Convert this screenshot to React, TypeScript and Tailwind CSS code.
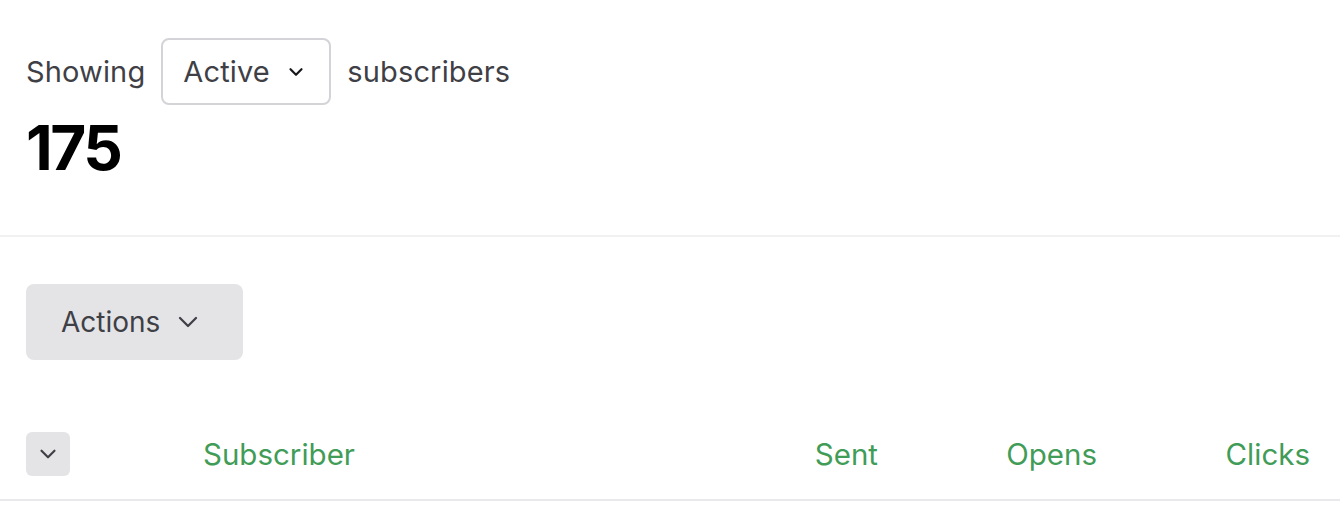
import { ChevronDown } from "lucide-react";

const App = () => {
  return (
    <div className="w-[1340px] h-[515px] bg-white font-['Inter',sans-serif] overflow-hidden">
      <section className="px-[26px] pt-[38px] pb-[56px] border-b-2 border-[#f1f1f2]">
        <div className="flex items-center gap-[16px] text-[29px] text-[#3f3f46] tracking-[0.005em]">
          <span>Showing</span>
          <button className="h-[67px] w-[170px] flex items-center pl-[20px] pr-[22px] justify-between border-2 border-[#d4d4d8] rounded-[8px] text-[#3f3f46]">
            <span>Active</span>
            <ChevronDown className="w-[22px] h-[22px] text-[#18181b]" strokeWidth={2.4} />
          </button>
          <span>subscribers</span>
        </div>
        <div className="mt-[12px] text-[62px] leading-[1] font-bold text-black tracking-[-0.04em]">175</div>
      </section>

      <div className="px-[26px] pt-[47px]">
        <button className="h-[76px] w-[217px] bg-[#e4e4e7] rounded-[8px] flex items-center pl-[35px] gap-[12px] text-[28px] text-[#3f3f46]">
          <span>Actions</span>
          <ChevronDown className="w-[32px] h-[32px]" strokeWidth={1.7} />
        </button>
      </div>

      <div className="mt-[49px] grid grid-cols-[177px_1fr_220px_219px_213px] items-center h-[92px] pl-[26px] pr-[30px] border-b-2 border-[#e9e9ec] text-[29.5px] text-[#419c57]">
        <button className="w-[44px] h-[44px] bg-[#e4e4e7] rounded-[6px] flex items-center justify-center">
          <ChevronDown className="w-[26px] h-[26px] text-[#3f3f46]" strokeWidth={2} />
        </button>
        <span>Subscriber</span>
        <span className="text-right">Sent</span>
        <span className="text-right">Opens</span>
        <span className="text-right">Clicks</span>
      </div>
    </div>
  );
};

export default App;
